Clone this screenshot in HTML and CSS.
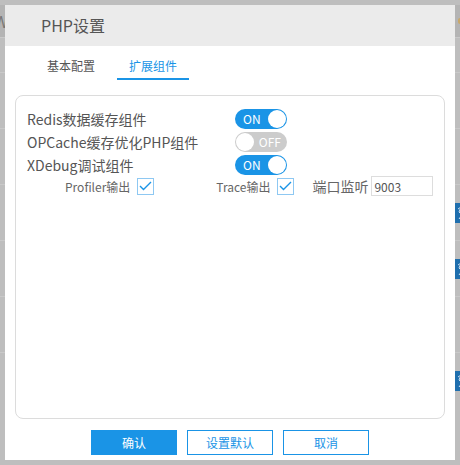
FILE: index.html
```html
<!DOCTYPE html>
<html lang="zh-CN">
<head>
    <meta charset="UTF-8">
    <title>PHP设置</title>
    <link rel="stylesheet" href="styles.css">
</head>
<body>

<!-- page behind the overlay -->
<div class="backdrop">
    <div class="bg-head"><span class="bg-letter">W</span><span class="bg-dot"></span></div>
    <div class="bg-row"></div>
    <div class="bg-row"></div>
    <div class="bg-row"></div>
    <div class="bg-row"><span class="bg-btn"><svg width="20" height="20" viewBox="0 0 20 20"><polyline points="3,6 6,4 4,9 7,12 4,16" fill="none" stroke="#cfe0f0" stroke-width="1"/></svg></span></div>
    <div class="bg-row"><span class="bg-btn"><svg width="20" height="20" viewBox="0 0 20 20"><polyline points="3,6 6,4 4,9 7,12 4,16" fill="none" stroke="#cfe0f0" stroke-width="1"/></svg></span></div>
    <div class="bg-row"></div>
    <div class="bg-row"><span class="bg-btn"><svg width="20" height="20" viewBox="0 0 20 20"><polyline points="3,6 6,4 4,9 7,12 4,16" fill="none" stroke="#cfe0f0" stroke-width="1"/></svg></span></div>
</div>

<div class="dialog">
    <div class="dialog-head">PHP设置</div>

    <div class="tabs">
        <span class="tab">基本配置</span>
        <span class="tab active">扩展组件</span>
    </div>

    <div class="panel">
        <div class="row">
            <span class="label">Redis数据缓存组件</span>
            <span class="switch on"><span class="switch-text">ON</span><span class="knob"></span></span>
        </div>
        <div class="row">
            <span class="label">OPCache缓存优化PHP组件</span>
            <span class="switch off"><span class="knob"></span><span class="switch-text">OFF</span></span>
        </div>
        <div class="row">
            <span class="label">XDebug调试组件</span>
            <span class="switch on"><span class="switch-text">ON</span><span class="knob"></span></span>
        </div>
        <div class="sub-row">
            <span class="sub-label profiler">Profiler输出</span>
            <span class="check">
                <svg width="13" height="10" viewBox="0 0 13 10"><polyline points="1,5 4.5,8.5 12,1" fill="none" stroke="#1a94e6" stroke-width="1.4"/></svg>
            </span>
            <span class="sub-label trace">Trace输出</span>
            <span class="check">
                <svg width="13" height="10" viewBox="0 0 13 10"><polyline points="1,5 4.5,8.5 12,1" fill="none" stroke="#1a94e6" stroke-width="1.4"/></svg>
            </span>
            <span class="port-label">端口监听</span>
            <input class="port" type="text" value="9003">
        </div>
    </div>

    <div class="actions">
        <button class="btn primary">确认</button>
        <button class="btn">设置默认</button>
        <button class="btn">取消</button>
    </div>
</div>

</body>
</html>
```

FILE: styles.css
```css
body {
    margin: 0;
    width: 460px;
    height: 465px;
    overflow: hidden;
    background-color: #bebebe;
    font-family: "Noto Sans CJK SC", sans-serif;
    position: relative;
}
.backdrop {
    padding-top: 5px;
}
.bg-head {
    height: 32px;
    background-color: #b4b4b4;
    display: flex;
    justify-content: space-between;
    align-items: center;
}
.bg-letter {
    font-size: 16px;
    color: #777;
    margin-left: -6px;
}
.bg-dot {
    width: 4px;
    height: 6px;
    background-color: #c9a86a;
    border-radius: 2px;
    margin-right: -2px;
}
.bg-row {
    height: 55px;
    border-top: 1px solid #c9c9c9;
    display: flex;
    justify-content: flex-end;
    align-items: center;
}
.bg-head + .bg-row {
    height: 34px;
}
.bg-btn {
    width: 20px;
    height: 20px;
    margin-right: -15px;
    background-color: #1f6fae;
}

/* dialog */
.dialog {
    position: absolute;
    left: 5px;
    top: 5px;
    width: 450px;
    height: 455px;
    background-color: #fff;
}
.dialog-head {
    height: 41px;
    line-height: 41px;
    background-color: #ebebeb;
    padding-left: 36px;
    font-size: 16px;
    color: #555;
}
.tabs {
    display: flex;
    gap: 10px;
    padding: 8px 0 0 30px;
    height: 32px;
}
.tab {
    width: 72px;
    text-align: center;
    font-size: 12px;
    color: #555;
    line-height: 24px;
    height: 24px;
}
.tab.active {
    color: #1a94e6;
    border-bottom: 2px solid #1a94e6;
}
.panel {
    margin: 9px 10px 0;
    height: 299px;
    border: 1px solid #dcdcdc;
    border-radius: 8px;
    padding: 11px 0 12px 11px;
}
.row {
    display: flex;
    align-items: center;
    height: 23px;
}
.label {
    width: 208px;
    font-size: 14px;
    color: #555;
}
.switch {
    width: 52px;
    height: 20px;
    border-radius: 10px;
    display: flex;
    align-items: center;
    box-sizing: border-box;
    padding: 0 1px;
    font-size: 12px;
    color: #fff;
}
.switch.on {
    background-color: #1a94e6;
    justify-content: space-between;
    padding-left: 8px;
}
.switch.off {
    background-color: #cccccc;
    justify-content: space-between;
    padding-right: 6px;
}
.knob {
    width: 18px;
    height: 18px;
    border-radius: 50%;
    background-color: #fff;
}
.sub-row {
    display: flex;
    align-items: center;
    height: 22px;
    margin-top: -1px;
    white-space: nowrap;
}
.sub-row > * {
    flex-shrink: 0;
}
.sub-label {
    font-size: 12px;
    color: #666;
}
.profiler {
    margin-left: 38px;
}
.trace {
    margin-left: 62px;
}
.check {
    width: 15px;
    height: 15px;
    border: 1px solid #8ec8f2;
    margin-left: 7px;
    display: flex;
    align-items: center;
    justify-content: center;
}
.port-label {
    font-size: 14px;
    color: #666;
    margin-left: 18px;
}
.port {
    width: 62px;
    height: 20px;
    box-sizing: border-box;
    margin: 0 0 0 3px;
    border: 1px solid #ddd;
    padding: 0 2px;
    font-family: "Noto Sans CJK SC", sans-serif;
    font-size: 12px;
    color: #555;
}
.actions {
    display: flex;
    justify-content: center;
    gap: 10px;
    margin-top: 11px;
}
.btn {
    width: 86px;
    height: 25px;
    box-sizing: border-box;
    border: 1px solid #1a94e6;
    background-color: #fff;
    color: #1a94e6;
    font-family: "Noto Sans CJK SC", sans-serif;
    font-size: 12px;
    padding: 0;
}
.btn.primary {
    background-color: #1a94e6;
    color: #fff;
}
```
